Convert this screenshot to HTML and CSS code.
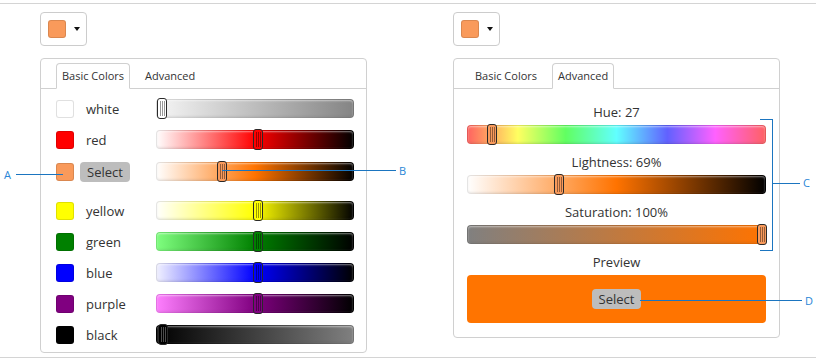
FILE: index.html
```html
<!DOCTYPE html>
<html>
<head>
	<meta charset="utf-8">
	<title>Color picker</title>
	<link rel="stylesheet" href="styles.css">
</head>
<body>
	<div class="page">
		<div class="rule"></div>
		<div class="demos">
			<!-- basic colors -->
			<div class="demo">
				<div class="picker-btn">
					<span class="swatch c-pick"></span>
					<span class="caret"></span>
				</div>
				<div class="panel">
					<ul class="tabs">
						<li class="tab active">Basic Colors</li>
						<li class="tab">Advanced</li>
					</ul>
					<ul class="colors">
						<li class="row">
							<span class="swatch c-white"></span>
							<span class="name">white</span>
							<div class="track t-white"><span class="thumb c-white" style="left:0px"></span></div>
						</li>
						<li class="row">
							<span class="swatch c-red"></span>
							<span class="name">red</span>
							<div class="track t-red"><span class="thumb c-red" style="left:96px"></span></div>
						</li>
						<li class="row row-select">
							<span class="swatch c-pick"></span>
							<span class="name"><span class="select-btn">Select</span></span>
							<div class="track t-orange"><span class="thumb c-pick" style="left:60px"></span></div>
						</li>
						<li class="row">
							<span class="swatch c-yellow"></span>
							<span class="name">yellow</span>
							<div class="track t-yellow"><span class="thumb c-yellow" style="left:96px"></span></div>
						</li>
						<li class="row">
							<span class="swatch c-green"></span>
							<span class="name">green</span>
							<div class="track t-green"><span class="thumb c-green" style="left:96px"></span></div>
						</li>
						<li class="row">
							<span class="swatch c-blue"></span>
							<span class="name">blue</span>
							<div class="track t-blue"><span class="thumb c-blue" style="left:96px"></span></div>
						</li>
						<li class="row">
							<span class="swatch c-purple"></span>
							<span class="name">purple</span>
							<div class="track t-purple"><span class="thumb c-purple" style="left:96px"></span></div>
						</li>
						<li class="row">
							<span class="swatch c-black"></span>
							<span class="name">black</span>
							<div class="track t-black"><span class="thumb c-black" style="left:1px"></span></div>
						</li>
					</ul>
				</div>
			</div>
			<!-- advanced -->
			<div class="demo">
				<div class="picker-btn">
					<span class="swatch c-pick"></span>
					<span class="caret"></span>
				</div>
				<div class="panel panel-adv">
					<ul class="tabs">
						<li class="tab">Basic Colors</li>
						<li class="tab active">Advanced</li>
					</ul>
					<div class="adv">
						<div class="adv-label">Hue: 27</div>
						<div class="track t-hue"><span class="thumb c-pick" style="left:19px"></span></div>
						<div class="adv-label">Lightness: 69%</div>
						<div class="track t-light"><span class="thumb c-pick" style="left:86px"></span></div>
						<div class="adv-label">Saturation: 100%</div>
						<div class="track t-sat"><span class="thumb c-pick" style="left:289px"></span></div>
						<div class="adv-label">Preview</div>
						<div class="preview"><span class="select-btn">Select</span></div>
					</div>
				</div>
			</div>
		</div>
		<div class="rule rule-bottom"></div>

		<!-- callouts -->
		<span class="line ann-a"></span>
		<span class="ann-text ann-a-text">A</span>
		<span class="line ann-b"></span>
		<span class="ann-text ann-b-text">B</span>
		<span class="line ann-c-top"></span>
		<span class="line ann-c-bar"></span>
		<span class="line ann-c-bottom"></span>
		<span class="line ann-c-mid"></span>
		<span class="ann-text ann-c-text">C</span>
		<span class="line ann-d"></span>
		<span class="ann-text ann-d-text">D</span>
	</div>
</body>
</html>
```

FILE: styles.css
```css
body{
	margin: 0;
	font-family: "Open Sans", "Liberation Sans", sans-serif;
	color: #333;
}
ul{
	list-style: none;
	margin: 0;
	padding: 0;
}
.page{
	position: relative;
	width: 816px;
	height: 363px;
	padding-top: 3px;
	box-sizing: border-box;
}
.rule{
	border-top: 1px solid #d4d4d4;
}
.rule-bottom{
	margin-top: 4px;
}
.demos{
	display: flex;
	gap: 86px;
	padding-left: 40px;
}
.demo{
	width: 327px;
}
.picker-btn{
	display: flex;
	align-items: center;
	gap: 8px;
	width: 47px;
	margin-top: 8px;
	padding: 7px 5px 7px 7px;
	box-sizing: border-box;
	border: 1px solid #ccc;
	border-radius: 4px;
	background: #fff;
}
.caret{
	width: 0;
	height: 0;
	border-left: 3.5px solid transparent;
	border-right: 3.5px solid transparent;
	border-top: 4px solid #111;
}
.swatch{
	flex: none;
	width: 18px;
	height: 18px;
	box-sizing: border-box;
	border: 1px solid rgba(0,0,0,0.12);
	border-radius: 3px;
}
.panel{
	margin-top: 12px;
	border: 1px solid #d0d0d0;
	border-radius: 4px;
	background: #fff;
}
.tabs{
	display: flex;
	padding: 4px 0 0 15px;
	border-bottom: 1px solid #d0d0d0;
}
.tab{
	margin-right: 9px;
	margin-bottom: -1px;
	padding: 0 5px;
	line-height: 24px;
	font-size: 11px;
	border: 1px solid transparent;
	border-radius: 4px 4px 0 0;
}
.tab.active{
	border-color: #d0d0d0;
	border-bottom-color: #fff;
	background: #fff;
}
.colors{
	padding: 4px 12px 2px 15px;
}
.row{
	display: flex;
	align-items: center;
	height: 31px;
}
.row-select{
	margin: 1px 0 8px;
}
.row .name{
	flex: 1;
	padding-left: 12px;
	font-size: 13px;
}
.row-select .name{
	padding-left: 6px;
}
.select-btn{
	display: inline-block;
	height: 20px;
	padding: 0 7px;
	line-height: 20px;
	font-size: 13px;
	color: #333;
	background: #bdbdbd;
	border-radius: 4px;
}
.track{
	position: relative;
	flex: none;
	width: 198px;
	height: 19px;
	box-sizing: border-box;
	border: 1px solid rgba(0,0,0,0.1);
	border-radius: 4px;
	background-origin: border-box !important;
	box-shadow: inset 0 1px 2px rgba(255,255,255,0.5), inset 0 -1px 2px rgba(0,0,0,0.08);
}
.thumb{
	position: absolute;
	top: -2px;
	width: 10px;
	height: 21px;
	box-sizing: border-box;
	border: 1px solid #2a2a2a;
	border-radius: 3px;
	background-image: linear-gradient(to right, transparent 2px, rgba(0,0,0,0.4) 2px 3px, transparent 3px 4px, rgba(0,0,0,0.4) 4px 5px, transparent 5px 6px, rgba(0,0,0,0.4) 6px 7px, transparent 7px);
	background-size: 100% 15px;
	background-position: 0 2px;
	background-repeat: no-repeat;
}
.thumb.c-black{
	background-image: linear-gradient(to right, transparent 2px, rgba(255,255,255,0.3) 2px 3px, transparent 3px 4px, rgba(255,255,255,0.3) 4px 5px, transparent 5px 6px, rgba(255,255,255,0.3) 6px 7px, transparent 7px);
}
.c-pick{ background-color: #f99a5b; }
.c-white{ background-color: #fff; }
.c-red{ background-color: #f00; }
.c-yellow{ background-color: #ff0; }
.c-green{ background-color: #008000; }
.c-blue{ background-color: #00f; }
.c-purple{ background-color: #800080; }
.c-black{ background-color: #000; }
.t-white{ background: linear-gradient(to right, #f6f6f6, #848484); }
.t-red{ background: linear-gradient(to right, #fff, #f00 50%, #000); }
.t-orange{ background: linear-gradient(to right, #fff, #ff7300 50%, #000); }
.t-yellow{ background: linear-gradient(to right, #fff, #ff0 50%, #000); }
.t-green{ background: linear-gradient(to right, #80ff80, #008000 50%, #000); }
.t-blue{ background: linear-gradient(to right, #f2f2ff, #00f 50%, #000); }
.t-purple{ background: linear-gradient(to right, #ff80ff, #800080 50%, #000); }
.t-black{ background: linear-gradient(to right, #000, #808080); }
.t-hue{ background: linear-gradient(to right, #ff6161, #ffff61 17%, #61ff61 33%, #61ffff 50%, #6161ff 67%, #ff61ff 83%, #ff6161); }
.t-light{ background: linear-gradient(to right, #fff, #ff7300 50%, #000); }
.t-sat{ background: linear-gradient(to right, #808080, #ff7300); }
.adv{
	padding: 13px 13px 14px;
	text-align: center;
}
.adv .track{
	width: 299px;
	margin-bottom: 8px;
}
.adv-label{
	height: 20px;
	margin-bottom: 3px;
	line-height: 20px;
	font-size: 13px;
}
.preview{
	display: flex;
	align-items: center;
	justify-content: center;
	height: 48px;
	background: #ff7400;
	border-radius: 4px;
}
.line{
	position: absolute;
	height: 1px;
	background: #1b75c0;
}
.ann-text{
	position: absolute;
	font-size: 11px;
	line-height: 14px;
	color: #2a86d6;
}
.ann-a{ left: 16px; top: 174px; width: 47px; }
.ann-a-text{ left: 4px; top: 168px; }
.ann-b{ left: 222px; top: 170px; width: 174px; }
.ann-b-text{ left: 399px; top: 164px; }
.ann-c-top{ left: 760px; top: 119px; width: 13px; }
.ann-c-bar{ left: 772px; top: 119px; width: 1px; height: 132px; }
.ann-c-bottom{ left: 760px; top: 250px; width: 13px; }
.ann-c-mid{ left: 772px; top: 183px; width: 28px; }
.ann-c-text{ left: 803px; top: 176px; }
.ann-d{ left: 640px; top: 300px; width: 162px; }
.ann-d-text{ left: 805px; top: 294px; }
```
